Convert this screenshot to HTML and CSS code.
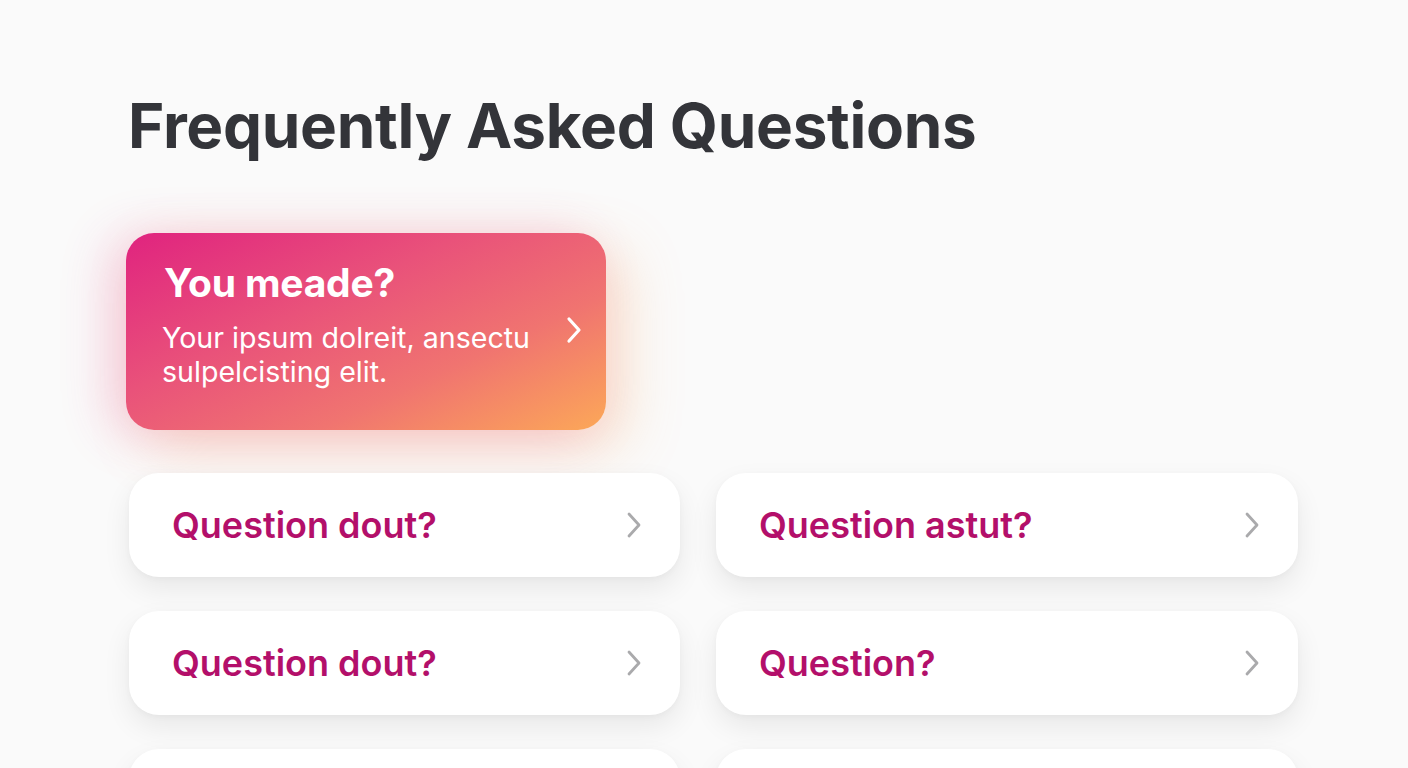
FILE: index.html
```html
<!DOCTYPE html>
<html lang="en">
<head>
<meta charset="utf-8">
<title>FAQ</title>
<link rel="stylesheet" href="styles.css">
</head>
<body>
<main class="page">
  <h1 class="title">Frequently Asked Questions</h1>
  <a class="featured" href="#">
    <div class="featured-text">
      <h2 class="featured-q">You meade?</h2>
      <p class="featured-a">Your ipsum dolreit, ansectu sulpelcisting elit.</p>
    </div>
    <svg class="chev chev-white" viewBox="0 0 16 28" width="16" height="28"><path d="M3 3 L13 14 L3 25" fill="none" stroke="currentColor" stroke-width="3.2" stroke-linecap="round" stroke-linejoin="round"/></svg>
  </a>
  <div class="grid">
    <a class="q" href="#"><span class="q-text">Question dout?</span><svg class="chev" viewBox="0 0 16 28" width="16" height="28"><path d="M3 3 L13 14 L3 25" fill="none" stroke="currentColor" stroke-width="2.8" stroke-linecap="round" stroke-linejoin="round"/></svg></a>
    <a class="q" href="#"><span class="q-text">Question astut?</span><svg class="chev" viewBox="0 0 16 28" width="16" height="28"><path d="M3 3 L13 14 L3 25" fill="none" stroke="currentColor" stroke-width="2.8" stroke-linecap="round" stroke-linejoin="round"/></svg></a>
    <a class="q" href="#"><span class="q-text">Question dout?</span><svg class="chev" viewBox="0 0 16 28" width="16" height="28"><path d="M3 3 L13 14 L3 25" fill="none" stroke="currentColor" stroke-width="2.8" stroke-linecap="round" stroke-linejoin="round"/></svg></a>
    <a class="q" href="#"><span class="q-text">Question?</span><svg class="chev" viewBox="0 0 16 28" width="16" height="28"><path d="M3 3 L13 14 L3 25" fill="none" stroke="currentColor" stroke-width="2.8" stroke-linecap="round" stroke-linejoin="round"/></svg></a>
    <div class="q q-empty"></div>
    <div class="q q-empty"></div>
  </div>
</main>
</body>
</html>
```
FILE: styles.css
```css
* { box-sizing: border-box; }
html, body { margin: 0; padding: 0; }
body {
  background: #fafafa;
  font-family: Inter, "Liberation Sans", Arial, sans-serif;
  overflow: hidden;
  height: 768px;
}
.page {
  padding: 86px 0 0 128px;
}
.title {
  margin: 0;
  font-size: 62px;
  line-height: 80px;
  font-weight: 700;
  color: #333439;
  letter-spacing: -0.3px;
}
.featured {
  margin-top: 67px;
  margin-left: -2px;
  width: 480px;
  height: 197px;
  border-radius: 28px;
  background: linear-gradient(155deg, #e0237f 0%, #e9527a 38%, #f07470 68%, #fca858 100%);
  box-shadow: -16px 4px 50px rgba(230, 60, 130, 0.24), 20px 18px 56px rgba(250, 160, 80, 0.26);
  display: flex;
  align-items: center;
  padding: 0 24px 0 36px;
  text-decoration: none;
  color: #fff;
}
.featured-text {
  flex: 1;
  align-self: flex-start;
  padding-top: 28px;
}
.featured-q {
  margin: 0 0 16px 2px;
  font-size: 39px;
  line-height: 44px;
  font-weight: 700;
  letter-spacing: -0.2px;
}
.featured-a {
  margin: 0;
  font-size: 28.6px;
  line-height: 34px;
  font-weight: 400;
  width: 400px;
}
.chev { color: #aaaaac; flex: none; }
.chev-white { color: #fff; margin-top: -3px; }
.grid {
  margin-top: 43px;
  margin-left: 1px;
  display: grid;
  grid-template-columns: 551px 582px;
  column-gap: 36px;
  row-gap: 34px;
}
.q {
  height: 104px;
  border-radius: 30px;
  background: #fff;
  box-shadow: 0 12px 28px rgba(0, 0, 0, 0.075), 0 2px 6px rgba(0, 0, 0, 0.03);
  display: flex;
  align-items: center;
  justify-content: space-between;
  padding: 0 38px 0 43px;
  text-decoration: none;
}
.q-text {
  color: #b30f6a;
  font-size: 36px;
  font-weight: 600;
  letter-spacing: 0;
}
```
